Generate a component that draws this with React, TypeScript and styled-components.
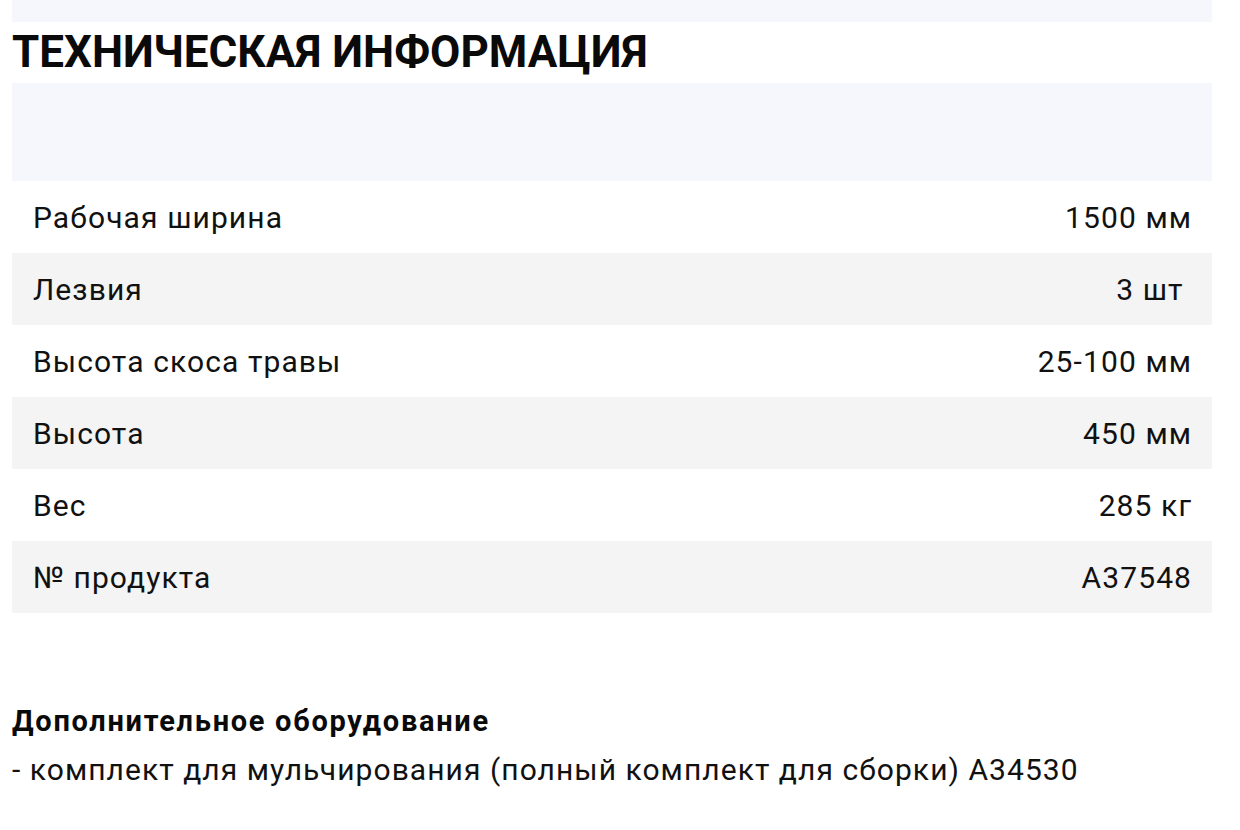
import React from "react";
import styled, { createGlobalStyle } from "styled-components";

const Global = createGlobalStyle`
  html, body { margin: 0; padding: 0; background: #ffffff; }
  body { font-family: Roboto, "Liberation Sans", Arial, sans-serif; color: #111111; }
`;

const Page = styled.div`
  width: 1200px;
  padding: 0 12px;
`;

const TopBand = styled.div`
  height: 22px;
  background: #f6f7fc;
`;

const Title = styled.h2`
  margin: 0;
  height: 61px;
  line-height: 61px;
  font-size: 44px;
  font-weight: 700;
  color: #0a0a0a;
`;

const TableHead = styled.div`
  height: 98px;
  background: #f6f7fc;
`;

const Row = styled.div<{ $shaded: boolean }>`
  height: 72px;
  display: flex;
  align-items: center;
  justify-content: space-between;
  padding: 0 21px;
  background: ${(p) => (p.$shaded ? "#f4f4f4" : "#ffffff")};
  font-size: 30px;
  letter-spacing: 1.1px;
  color: #111111;
`;

const Cell = styled.span<{ $end?: boolean }>`
  margin-right: ${(p) => (p.$end ? "-1.1px" : "0")};
`;

const Extra = styled.div`
  margin-top: 90px;
`;

const ExtraTitle = styled.div`
  font-size: 29px;
  font-weight: 700;
  line-height: 36px;
  letter-spacing: 1.7px;
  color: #0a0a0a;
`;

const ExtraItem = styled.div`
  margin-top: 8px;
  font-size: 30px;
  line-height: 46px;
  letter-spacing: 1.05px;
  color: #111111;
`;

const rows: [string, string][] = [
  ["Рабочая ширина", "1500 мм"],
  ["Лезвия", "3 шт\u00a0"],
  ["Высота скоса травы", "25-100 мм"],
  ["Высота", "450 мм"],
  ["Вес", "285 кг"],
  ["№ продукта", "A37548"],
];

export default function App() {
  return (
    <Page>
      <Global />
      <TopBand />
      <Title>ТЕХНИЧЕСКАЯ ИНФОРМАЦИЯ</Title>
      <TableHead />
      {rows.map(([k, v], i) => (
        <Row key={k} $shaded={i % 2 === 1}>
          <Cell>{k}</Cell>
          <Cell $end>{v}</Cell>
        </Row>
      ))}
      <Extra>
        <ExtraTitle>Дополнительное оборудование</ExtraTitle>
        <ExtraItem>- комплект для мульчирования (полный комплект для сборки) A34530</ExtraItem>
      </Extra>
    </Page>
  );
}
